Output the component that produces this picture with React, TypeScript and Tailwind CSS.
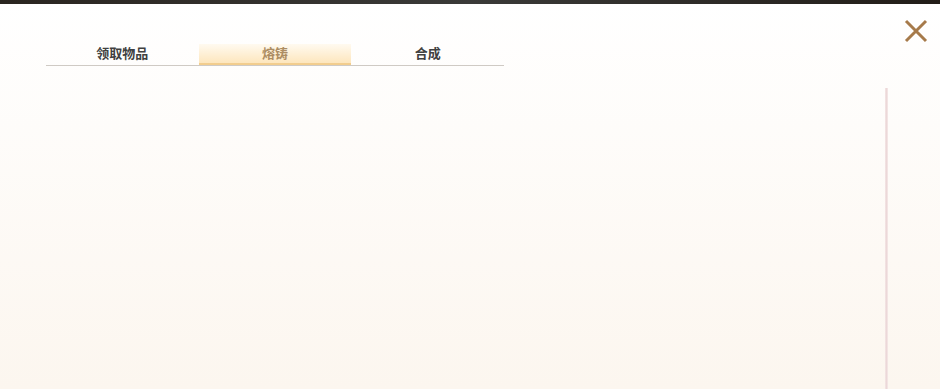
const tabs = ['领取物品', '熔铸', '合成'];

export default function App() {
  return (
    <div
      className="relative h-[389px] w-[940px] overflow-hidden bg-gradient-to-b from-white to-[#fcf6ef]"
      style={{ fontFamily: '"Noto Sans CJK SC", "Noto Sans", sans-serif' }}
    >
      <div className="h-[4px] bg-gradient-to-r from-[#2a2520] via-[#3a3a38] to-[#221d18]" />
      <div className="flex pl-[46px] pt-[40px]">
        <div className="flex w-[458px] border-b border-[#cfcac4]">
          {tabs.map((t, i) => (
            <div
              key={t}
              className={
                i === 1
                  ? 'flex h-[21px] flex-1 items-center justify-center border-b-2 border-[#f2cd8e] bg-gradient-to-b from-[#fffaf0] to-[#fde6bd] pb-[1px] text-[13px] font-bold text-[#ad8d62]'
                  : 'flex h-[21px] flex-1 items-center justify-center pb-[3px] text-[13px] font-bold text-[#404040]'
              }
            >
              {t}
            </div>
          ))}
        </div>
      </div>
      <button className="absolute left-[904px] top-[19px] h-[24px] w-[24px]">
        <svg viewBox="0 0 24 24" width="24" height="24">
          <path d="M2 2 L22 22 M22 2 L2 22" stroke="#a67a4a" strokeWidth="3" />
        </svg>
      </button>
      <div className="absolute left-[885px] top-[88px] h-[301px] w-[3px] bg-gradient-to-r from-[#f4e6e6] via-[#ecd8d8] to-[#f6eaea]" />
    </div>
  );
}
